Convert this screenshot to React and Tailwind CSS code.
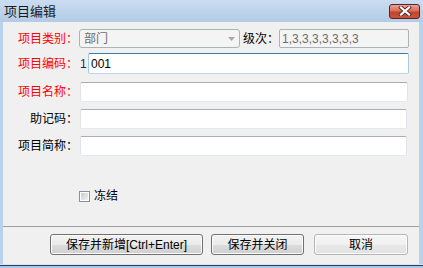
const font = { fontFamily: '"Liberation Sans", "Noto Sans CJK SC", sans-serif' };

const Label = ({ children, red }) => (
    <div className={`w-[75px] shrink-0 text-right text-[12px] leading-none ${red ? 'text-[#ff0000]' : 'text-black'}`}>{children}</div>
);

const TextBox = ({ className = '', focused, children }) => (
    <div
        className={`flex items-center rounded-[2px] border bg-white px-[3px] text-[12px] leading-none ${
            focused
                ? 'border-[#a4c9e3] border-t-[#3d7bad] border-b-[#b7d9ed]'
                : 'border-[#e2e3ea] border-t-[#abadb3] border-b-[#e3e9ef]'
        } ${className}`}
    >
        {children}
    </div>
);

const Button = ({ children, className = '', muted }) => (
    <div
        className={`flex h-[21px] items-center justify-center rounded-[3px] border ${
            muted ? 'border-[#b5b5b5]' : 'border-[#707070]'
        } bg-[linear-gradient(#f2f2f2_0%,#ebebeb_50%,#dddddd_50%,#cfcfcf_100%)] text-[12px] leading-none text-black shadow-[inset_0_0_0_1px_#fcfcfc] ${className}`}
    >
        {children}
    </div>
);

const App = () => {
    return (
        <div className="flex h-[268px] w-[423px] flex-col overflow-hidden bg-[#b9d1ea]" style={font}>
            <div className="flex h-[22px] shrink-0 items-center bg-[linear-gradient(#cadcf0,#b3cbe7)] pl-[4px] pr-[3px]">
                <span className="text-[13px] leading-none text-[#1b1b1b]">项目编辑</span>
                <div className="ml-auto flex h-[15px] w-[31px] items-center justify-center rounded-[3px] border border-[#5b2222] bg-[linear-gradient(#eaa596_0%,#d86d58_45%,#c2442e_55%,#c9533c_100%)]">
                    <svg width="14" height="10" viewBox="0 0 14 10">
                        <path d="M3 1.5 L11 8.5 M11 1.5 L3 8.5" stroke="#5a2a2a" strokeWidth="4" strokeLinecap="square" />
                        <path d="M3 1.5 L11 8.5 M11 1.5 L3 8.5" stroke="#ffffff" strokeWidth="2.2" strokeLinecap="square" />
                    </svg>
                </div>
            </div>

            <div className="flex h-[242px] shrink-0">
                <div className="w-[3px] shrink-0 bg-[#b9d1ea]" />
                <div className="flex flex-1 flex-col bg-[#f0f0f0]">
                    <div className="mt-[7px] flex h-[19px] items-center">
                        <Label red>项目类别：</Label>
                        <div className="ml-[1px] flex h-[19px] w-[161px] items-center rounded-[3px] border border-[#adb2b5] bg-[#f4f4f4] pl-[4px] pr-[4px] text-[12px] leading-none text-[#6d6d6d]">
                            <span>部门</span>
                            <svg className="ml-auto" width="7" height="4" viewBox="0 0 7 4">
                                <path d="M0 0 L7 0 L3.5 4 Z" fill="#a8a8a8" />
                            </svg>
                        </div>
                        <div className="ml-[3px] w-[36px] shrink-0 text-[12px] leading-none text-black">级次：</div>
                        <div className="flex h-[19px] w-[130px] items-center rounded-[2px] border border-[#adb2b5] bg-[#f4f4f4] pl-[2px] text-[12px] leading-none text-[#6d6d6d]">
                            1,3,3,3,3,3,3,3
                        </div>
                    </div>

                    <div className="mt-[5px] flex h-[21px] items-center">
                        <Label red>项目编码：</Label>
                        <div className="ml-[2px] w-[8px] shrink-0 text-[12px] leading-none text-[#1c2a5c]">1</div>
                        <TextBox focused className="h-[21px] w-[321px] pl-[2px] text-[#000]">001</TextBox>
                    </div>

                    <div className="mt-[8px] flex h-[20px] items-center">
                        <Label red>项目名称：</Label>
                        <TextBox className="ml-[2px] h-[20px] w-[328px]" />
                    </div>

                    <div className="mt-[7px] flex h-[20px] items-center">
                        <Label>助记码：</Label>
                        <TextBox className="ml-[2px] h-[20px] w-[327px]" />
                    </div>

                    <div className="mt-[7px] flex h-[20px] items-center">
                        <Label>项目简称：</Label>
                        <TextBox className="ml-[2px] h-[20px] w-[327px]" />
                    </div>

                    <div className="ml-[76px] mt-[34px] flex h-[12px] items-center">
                        <div className="flex h-[11px] w-[11px] items-center justify-center border border-[#8e8f8f] bg-white">
                            <div className="h-[7px] w-[7px] bg-[linear-gradient(135deg,#c6cbd1,#f2f2f2)]" />
                        </div>
                        <span className="ml-[4px] text-[12px] leading-none text-black">冻结</span>
                    </div>

                    <div className="mt-[24px] h-[1px] bg-[#a0a0a0]" />

                    <div className="ml-[47px] mt-[7px] flex items-center">
                        <Button className="w-[153px]">
                            保存并新增[Ctrl+Enter]
                        </Button>
                        <Button className="ml-[8px] w-[93px]">保存并关闭</Button>
                        <Button muted className="ml-[10px] w-[94px] bg-[linear-gradient(#f6f6f6_0%,#f0f0f0_50%,#e8e8e8_50%,#e2e2e2_100%)]">
                            取消
                        </Button>
                    </div>
                </div>
                <div className="w-[4px] shrink-0 bg-[#b9d1ea]" />
            </div>

            <div className="h-[1px] shrink-0 bg-[#d6e3f1]" />
            <div className="h-[1px] shrink-0 bg-[#2e3f55]" />
            <div className="flex-1 bg-[#a9c6e6]" />
        </div>
    );
};

export default App;
